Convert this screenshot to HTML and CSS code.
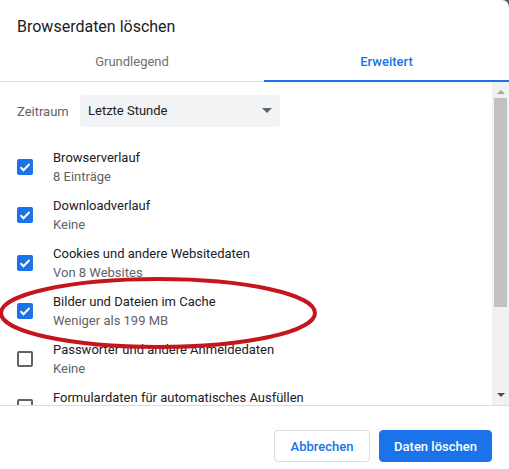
FILE: index.html
```html
<!DOCTYPE html>
<html lang="de">
<head>
  <meta charset="UTF-8">
  <meta name="viewport" content="width=device-width, initial-scale=1.0">
  <title>Browserdaten löschen</title>
  <link rel="stylesheet" href="styles.css">
</head>
<body>
  <div class="dialog">
    <h1 class="title">Browserdaten löschen</h1>
    <div class="tabs">
      <div class="tab">Grundlegend</div>
      <div class="tab active">Erweitert</div>
    </div>

    <div class="body">
      <div class="scroll-content">
        <div class="range-row">
          <span class="range-label">Zeitraum</span>
          <div class="select">
            <span>Letzte Stunde</span>
            <span class="select-arrow"></span>
          </div>
        </div>

        <div class="item">
          <span class="checkbox checked"><svg viewBox="0 0 16 16"><path d="M3.5 8.2l3 3 6-6.2" /></svg></span>
          <div class="item-text">
            <div class="item-name">Browserverlauf</div>
            <div class="item-sub">8 Einträge</div>
          </div>
        </div>
        <div class="item">
          <span class="checkbox checked"><svg viewBox="0 0 16 16"><path d="M3.5 8.2l3 3 6-6.2" /></svg></span>
          <div class="item-text">
            <div class="item-name">Downloadverlauf</div>
            <div class="item-sub">Keine</div>
          </div>
        </div>
        <div class="item">
          <span class="checkbox checked"><svg viewBox="0 0 16 16"><path d="M3.5 8.2l3 3 6-6.2" /></svg></span>
          <div class="item-text">
            <div class="item-name">Cookies und andere Websitedaten</div>
            <div class="item-sub">Von 8 Websites</div>
          </div>
        </div>
        <div class="item">
          <span class="checkbox checked"><svg viewBox="0 0 16 16"><path d="M3.5 8.2l3 3 6-6.2" /></svg></span>
          <div class="item-text">
            <div class="item-name">Bilder und Dateien im Cache</div>
            <div class="item-sub">Weniger als 199 MB</div>
          </div>
        </div>
        <div class="item">
          <span class="checkbox"></span>
          <div class="item-text">
            <div class="item-name">Passwörter und andere Anmeldedaten</div>
            <div class="item-sub">Keine</div>
          </div>
        </div>
        <div class="item">
          <span class="checkbox"></span>
          <div class="item-text">
            <div class="item-name">Formulardaten für automatisches Ausfüllen</div>
            <div class="item-sub">Keine</div>
          </div>
        </div>
      </div>

      <!-- Windows style scrollbar -->
      <div class="scrollbar">
        <span class="arrow up"></span>
        <div class="thumb"></div>
        <span class="arrow down"></span>
      </div>
    </div>

    <div class="footer">
      <button class="btn">Abbrechen</button>
      <button class="btn primary">Daten löschen</button>
    </div>

    <!-- red marker drawn over the screenshot -->
    <svg class="marker" width="330" height="90" viewBox="0 0 330 90">
      <ellipse cx="160" cy="43" rx="157" ry="34" />
    </svg>
  </div>
</body>
</html>
```

FILE: styles.css
```css
html, body {
  margin: 0;
  padding: 0;
  background-color: #5f5f5f;
}
body {
  font-family: Roboto, "Noto Sans", Arial, sans-serif;
  color: #202124;
}
.dialog {
  position: relative;
  width: 509px;
  height: 469px;
  background-color: #fff;
  border-top-right-radius: 7px;
  overflow: hidden;
  display: flex;
  flex-direction: column;
}
.title {
  margin: 0;
  padding: 17px 17px 0;
  height: 25px;
  font-size: 16px;
  font-weight: 400;
  line-height: 20px;
  color: #202124;
}
/* Tabs */
.tabs {
  display: flex;
  height: 40px;
  box-shadow: inset 0 -1px #dadce0;
}
.tab {
  height: 38px;
  line-height: 40px;
  border-bottom: 2px solid transparent;
  text-align: center;
  font-size: 13px;
  font-weight: 400;
  color: #6b6f74;
}
.tab:first-child {
  width: 264px;
}
.tab.active {
  flex: 1;
  font-weight: 500;
  color: #1a73e8;
  border-bottom-color: #1a73e8;
}
/* Scroll area */
.body {
  display: flex;
  height: 323px;
  border-bottom: 1px solid #dadce0;
}
.scroll-content {
  flex: 1;
  overflow: hidden;
  padding-top: 13px;
}
.range-row {
  display: flex;
  align-items: center;
  padding-left: 17px;
  margin-bottom: 16px;
}
.range-label {
  width: 63px;
  font-size: 13px;
  color: #5f6368;
}
.select {
  width: 200px;
  height: 32px;
  box-sizing: border-box;
  padding: 0 8px 1px;
  background-color: #f1f3f4;
  border-radius: 4px;
  display: flex;
  align-items: center;
  justify-content: space-between;
  font-size: 13px;
  color: #202124;
}
.select-arrow {
  width: 0;
  height: 0;
  border-left: 5px solid transparent;
  border-right: 5px solid transparent;
  border-top: 5px solid #5f6368;
}
.item {
  display: flex;
  align-items: center;
  height: 48px;
  padding-left: 17px;
}
.checkbox {
  width: 16px;
  height: 16px;
  box-sizing: border-box;
  border: 2px solid #5f6368;
  border-radius: 2px;
  margin-right: 20px;
  flex-shrink: 0;
}
.checkbox.checked {
  border: none;
  background-color: #1a73e8;
}
.checkbox svg {
  display: block;
  width: 16px;
  height: 16px;
  fill: none;
  stroke: #fff;
  stroke-width: 2;
}
.item-text {
  font-size: 13px;
  line-height: 19px;
  white-space: nowrap;
}
.item-name {
  color: #202124;
}
.item-sub {
  color: #5f6368;
}
/* Scrollbar */
.scrollbar {
  width: 17px;
  background-color: #f1f1f1;
  display: flex;
  flex-direction: column;
  align-items: center;
}
.thumb {
  width: 13px;
  height: 209px;
  background-color: #c1c1c1;
  margin-top: 4px;
}
.arrow {
  width: 0;
  height: 0;
  border-left: 4px solid transparent;
  border-right: 4px solid transparent;
}
.arrow.up {
  margin-top: 8px;
  border-bottom: 4px solid #a3a3a3;
}
.arrow.down {
  margin-top: auto;
  margin-bottom: 8px;
  border-top: 4px solid #505050;
}
/* Footer */
.footer {
  flex: 1;
  display: flex;
  justify-content: flex-end;
  align-items: flex-start;
  gap: 9px;
  padding: 24px 17px 0 0;
}
.btn {
  height: 32px;
  width: 96px;
  padding: 0;
  font-family: inherit;
  font-size: 13px;
  font-weight: 500;
  border-radius: 4px;
  border: 1px solid #dadce0;
  background-color: #fff;
  color: #1a73e8;
  cursor: pointer;
}
.btn.primary {
  width: 113px;
  background-color: #1a73e8;
  border-color: #1a73e8;
  color: #fff;
}
.marker {
  position: absolute;
  left: -2px;
  top: 270px;
  fill: none;
  stroke: #c4161c;
  stroke-width: 4;
}
```
